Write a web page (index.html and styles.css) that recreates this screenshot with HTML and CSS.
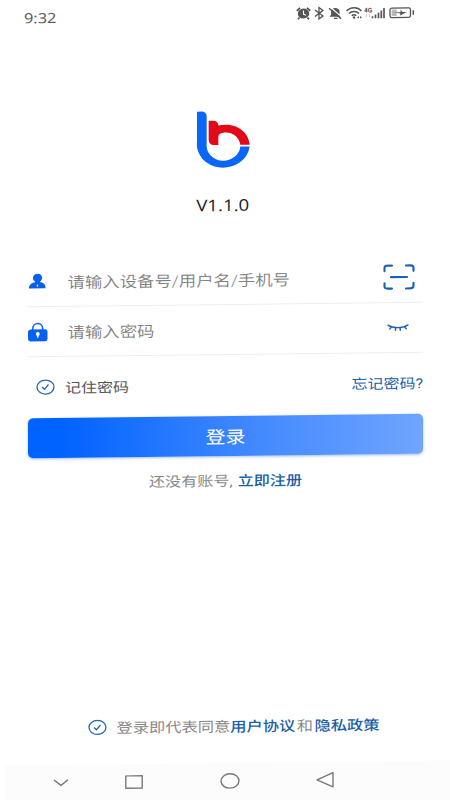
FILE: index.html
```html
<!DOCTYPE html>
<html lang="zh-CN">
<head>
<meta charset="utf-8">
<title>登录</title>
<link rel="stylesheet" href="styles.css">
</head>
<body>
<div class="screen">
  <header class="status">
    <span class="time">9:32</span>
    <svg class="status-icons" width="120" height="16" viewBox="0 0 120 16" fill="none" stroke="#555">
      <ellipse cx="7.500" cy="8.500" rx="5.700" ry="5" fill="#555" stroke="none"/>
      <path d="M.8 5.700 4 2.800M14.200 5.700 11 2.800M3.500 12.500 2 14M11.500 12.500l1.500 1.500" stroke-width="1.800"/>
      <path d="M7.500 5.500V9l2.500 1.200" stroke="#fff" stroke-width="1.100"/>
      <path d="M19 5l8 6-4 3V2.500l4 3-8 6" stroke-width="1.300"/>
      <path d="M33.500 12h11.500l-1.400-2V7c0-5-8.500-5-8.500-.5V10zM38 13h3.500v1.200H38z" fill="#555" stroke="none"/>
      <path d="M34.500 2.500l12 10.500" stroke="#fff" stroke-width="1.200"/>
      <path d="M33 3.500l12 10.500" stroke-width="1.400"/>
      <path d="M50.500 6.500c4-4.400 11-4.400 15 0M53 9c2.800-2.800 7.200-2.800 10 0M55.800 11.200c1.200-1.300 3.200-1.300 4.400 0" stroke-width="1.500"/>
      <circle cx="58" cy="13" r="1.200" fill="#555" stroke="none"/>
      <path d="M61 13l2-1.500V14zM66 13l-2-1.500V14z" fill="#555" stroke="none"/>
      <text x="68" y="8" class="net">4G</text>
      <path d="M70.500 10v3M73.500 10v3" stroke="#ccc" stroke-width="1"/>
      <path d="M76.500 12v2M79.500 10.300V14M82.500 8.500V14M85.300 6.300V14M88 3.800V14" stroke-width="1.700"/>
      <rect x="94" y="4" width="20.500" height="9.500" rx="1.800" stroke-width="1.300"/>
      <rect x="95.700" y="5.500" width="5" height="6.500" fill="#bbb" stroke="none"/>
      <path d="M98 8.500l6.500-.2V6l2.200 2h4l-6.500 3.500V9.500z" fill="#555" stroke="none"/>
      <path d="M117.300 6.500v4.500" stroke-width="1.500"/>
    </svg>
  </header>

  <section class="brand">
    <svg class="logo" width="55" height="58" viewBox="48 31 165 172">
      <path fill="#0a66f6" d="M51 34h15q14 1 14 15v82a50 46 0 0 0 101 9h28a79 70 0 0 1-158-15z"/>
      <path fill="#e20a18" d="M86 62h13q15 0 16 14c45-9 90 13 94 59h-28c-4-27-30-42-54-36-9 2-12 5-12 13v23H102q-16-1-16-17z"/>
    </svg>
    <span class="version">V1.1.0</span>
  </section>

  <form class="login">
    <div class="field">
      <svg class="field-icon" width="20" height="18" viewBox="0 0 20 18">
        <ellipse cx="9.500" cy="5.800" rx="4.600" ry="4.300" fill="#0b5fe8"/>
        <path d="M1 16.200c0-4.200 2.500-5.400 6-6.200l.5-2h4l.5 2c3.500.8 5.500 2 5.500 6.200z" fill="#0b5fe8"/>
        <path d="M9.500 12.500v2" stroke="#cfe0ff" stroke-width="1.300"/>
      </svg>
      <span class="placeholder">请输入设备号/用户名/手机号</span>
      <svg class="scan" width="32" height="26" viewBox="0 0 32 26" fill="none" stroke="#1560bd" stroke-width="2.100" stroke-linecap="round">
        <path d="M1.500 7V4Q1.500 1.500 4.500 1.500H9M23 1.500h4.500q3 0 3 2.500V7M30.500 19v3q0 2.500-3 2.500H23M9 24.500H4.500q-3 0-3-2.500V19M8 13h16"/>
      </svg>
    </div>
    <div class="field">
      <svg class="field-icon" width="20" height="20" viewBox="0 0 20 20">
        <path d="M4.800 9V6.500C4.800-.3 14.700-.3 14.700 6.500V9" fill="none" stroke="#1260d8" stroke-width="1.600"/>
        <rect x="0" y="7.200" width="19.500" height="12" rx="2.500" fill="#0860f2"/>
        <path d="M9.800 11.500v4" stroke="#fff" stroke-width="1.600"/>
        <circle cx="9.800" cy="11.800" r="1.900" fill="#fff"/>
      </svg>
      <span class="placeholder">请输入密码</span>
      <svg class="eye" width="22" height="10" viewBox="0 0 22 10" fill="none" stroke="#1f62b2" stroke-width="1.400" stroke-linecap="round">
        <path d="M1 2c5 3.500 15 3.500 20 0M4.500 3.700 2.800 6M8.700 4.600 8.400 7.300M13 4.600l.3 2.700M17.300 3.700l2 2"/>
      </svg>
    </div>
    <div class="options">
      <svg class="check" width="19" height="16" viewBox="0 0 19 16" fill="none" stroke="#2467b0" stroke-width="1.300">
        <ellipse cx="9.500" cy="8" rx="8.500" ry="7"/><path d="M6 8l2.500 2.300L12.500 5.500"/>
      </svg>
      <span class="remember">记住密码</span>
      <a class="link forgot">忘记密码?</a>
    </div>
    <div class="submit"><span>登录</span></div>
    <div class="register"><span>还没有账号,</span><a class="link">立即注册</a></div>
  </form>

  <div class="agreement">
    <svg class="check" width="19" height="16" viewBox="0 0 19 16" fill="none" stroke="#2467b0" stroke-width="1.300">
      <ellipse cx="9.500" cy="8" rx="8.500" ry="7"/><path d="M6 8l2.500 2.300L12.500 5.500"/>
    </svg>
    <span class="terms">登录即代表同意<a class="link">用户协议</a><i>和</i><a class="link">隐私政策</a></span>
  </div>

  <nav class="navbar">
    <svg width="16" height="8" viewBox="0 0 16 8"><path d="M1 1l7 5.500L15 1"/></svg>
    <svg width="18" height="14" viewBox="0 0 18 14"><rect x=".8" y=".8" width="16.400" height="12.400"/></svg>
    <svg width="20" height="16" viewBox="0 0 20 16"><ellipse cx="10" cy="8" rx="9" ry="7.200"/></svg>
    <svg width="18" height="16" viewBox="0 0 18 16"><path d="M1 8l16-7.200v14.400z"/></svg>
  </nav>
</div>
</body>
</html>
```
FILE: styles.css
```css
* { box-sizing: border-box; }

html, body {
  margin: 0;
  height: 100%;
  overflow: hidden;
  background: #fff;
}

body {
  font-family: Roboto, "Noto Sans CJK SC", sans-serif;
  font-size: 16px;
  color: #555;
}

.screen {
  width: 450px;
  height: 800px;
  display: flex;
  flex-direction: column;
  transform: skewY(-0.65deg);
}

svg { display: block; flex: none; }

.status {
  height: 32px;
  padding: 0 34px 0 24px;
  display: flex;
  align-items: center;
  justify-content: space-between;
}

.time {
  font: 500 14px/20px "Open Sans", sans-serif;
  transform: scaleX(1.17);
  transform-origin: left;
}

.status-icons { margin-top: -4px; }

.net { font: bold 6.5px Roboto, sans-serif; fill: #555; stroke: none; }

.brand {
  height: 222px;
  padding: 78px 4px 0 0;
  display: flex;
  flex-direction: column;
  align-items: center;
}

.version {
  margin-top: 26px;
  font: 16px/22px "Open Sans", sans-serif;
  color: #222;
  transform: scaleX(1.17);
}

.login {
  margin: 0 28px;
  width: 395px;
}

.field {
  height: 50px;
  display: flex;
  align-items: center;
  border-bottom: 1px solid #eee;
}

.field:first-child { height: 51px; }

.placeholder {
  margin-left: 19.5px;
  flex: 1;
  font-size: 17.4px;
  font-weight: 350;
  color: #808080;
  transform: scaleY(.88);
}

.scan { margin-right: 8.5px; }
.eye { margin-right: 14px; }

.options {
  height: 61px;
  padding: 0 0 2px 8px;
  display: flex;
  align-items: center;
}

.remember {
  margin-left: 10px;
  flex: 1;
  transform: scaleY(.86);
}

.link { color: #1a5fa8; font-weight: 500; }

.forgot { font-weight: 400; transform: translateY(-.5px) scaleY(.86); }

.submit {
  height: 40px;
  border-radius: 5px;
  display: flex;
  align-items: center;
  justify-content: center;
  font-size: 20px;
  color: #fff;
  background: linear-gradient(90deg, #0062ff 8%, #3f87ff 55%, #70a5ff);
  box-shadow: 0 1px 3px rgba(40, 90, 170, .4);
}

.submit span { transform: translateY(-.5px) scaleY(.86); }

.register {
  height: 47px;
  display: flex;
  align-items: center;
  justify-content: center;
  gap: 5px;
  font-size: 16.1px;
  color: #888;
  transform: scaleY(.86);
}

.agreement {
  margin-top: auto;
  height: 74px;
  padding-left: 88px;
  display: flex;
  align-items: center;
}

.terms {
  margin-left: 9.5px;
  font-size: 16.25px;
  color: #888;
  white-space: nowrap;
  transform: translateY(-.3px) scaleY(.86);
}

.terms i { font-style: normal; margin: 0 1.5px; }

.navbar {
  height: 37px;
  margin-left: 5px;
  padding: 0 48px 1px;
  display: flex;
  align-items: center;
  background: #fcfcfc;
  box-shadow: 0 8px #fcfcfc;
}

.navbar svg:nth-child(2) { margin-left: 56px; }
.navbar svg:nth-child(3) { margin-left: 77px; }
.navbar svg:nth-child(4) { margin-left: 76px; }

.navbar path, .navbar rect, .navbar ellipse {
  fill: none;
  stroke: #777;
  stroke-width: 1.4;
  stroke-linejoin: round;
}
```
